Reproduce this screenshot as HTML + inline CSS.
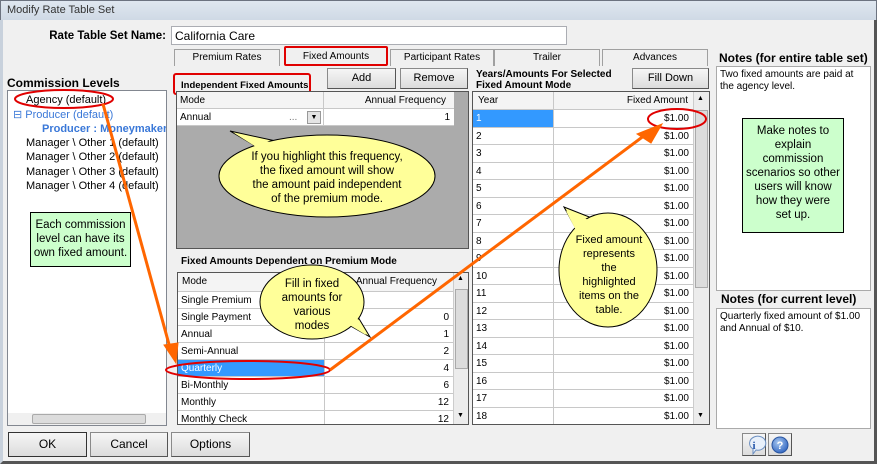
<!DOCTYPE html>
<html><head><meta charset="utf-8"><style>
*{box-sizing:border-box;margin:0;padding:0}
body{width:877px;height:464px;overflow:hidden;background:#f0f0f0;font-family:"Liberation Sans",Arial,sans-serif;font-size:11px;color:#000;position:relative}
.a{position:absolute}
.btn{position:absolute;background:linear-gradient(#f6f6f6,#dcdcdc);border:1px solid #8a8a8a;border-right-color:#555;border-bottom-color:#555;text-align:center;font-size:11px}
.box{position:absolute;background:#fff;border:1px solid #828790}
.b{font-weight:bold}
.tab{position:absolute;top:49px;height:17px;border:1px solid #a0a0a0;border-bottom:none;background:#f0f0f0;text-align:center;line-height:16px;font-size:10px}
.row{position:absolute;left:0;height:17px;border-bottom:1px solid #c8c8c8;font-size:10px;line-height:17px;background:#fff}
.c1{position:absolute;left:3px}
.cr{position:absolute;right:4px}
.hd{background:#f4f4f4;border-bottom:1px solid #c8c8c8}
.sb{position:absolute;background:#ececec;border-left:1px solid #ccc}
.tree div{position:absolute;font-size:11px;white-space:nowrap}
</style></head><body>
<div class="a" style="left:0;top:0;width:877px;height:20px;background:linear-gradient(#dfe7f0,#cfd9e5);border:1px solid #6c7380;border-bottom:none"></div>
<div class="a" style="left:7px;top:4px;font-size:11px;color:#333">Modify Rate Table Set</div>
<div class="a" style="left:0;top:20px;width:877px;height:444px;border:3px solid #c8d1dc;border-top:none;border-right:3px solid #555;border-bottom:3px solid #555"></div>

<div class="a b" style="left:0;width:166px;text-align:right;white-space:nowrap;top:30px;font-size:11.5px">Rate Table Set Name:</div>
<div class="box" style="left:171px;top:26px;width:396px;height:19px;border-color:#abadb3;padding:2px 3px;font-size:12px">California Care</div>

<div class="tab" style="left:174px;width:106px">Premium Rates</div>
<div class="tab" style="left:284px;width:104px;top:46px;height:20px;border:2px solid #e00000;border-radius:2px;line-height:18px">Fixed Amounts</div>
<div class="tab" style="left:390px;width:104px">Participant Rates</div>
<div class="tab" style="left:494px;width:106px">Trailer</div>
<div class="tab" style="left:602px;width:106px">Advances</div>

<div class="a b" style="left:7px;top:76px;font-size:12px">Commission Levels</div>
<div class="box tree" style="left:7px;top:90px;width:160px;height:336px;overflow:hidden">
<div style="left:18px;top:3px">Agency (default)</div>
<div style="left:5px;top:17px;color:#3a78d8">⊟ Producer (default)</div>
<div style="left:34px;top:32px;color:#3a78d8;font-weight:bold">Producer : Moneymaker, C</div>
<div style="left:18px;top:46px">Manager \ Other 1 (default)</div>
<div style="left:18px;top:60px">Manager \ Other 2 (default)</div>
<div style="left:18px;top:75px">Manager \ Other 3 (default)</div>
<div style="left:18px;top:89px">Manager \ Other 4 (default)</div>
<div style="left:0;top:322px;width:158px;height:12px;background:#f0f0f0"></div>
<div style="left:24px;top:323px;width:114px;height:10px;background:#dcdcdc;border:1px solid #aaa;border-radius:2px"></div>
</div>
<div class="a" style="left:30px;top:212px;width:101px;height:55px;background:#ccffcc;border:1px solid #000;text-align:center;font-size:11.5px;line-height:14px;padding-top:5px">Each commission level can have its own fixed amount.</div>

<div class="a b" style="left:173px;top:73px;width:138px;height:22px;border:2px solid #e00000;border-radius:3px;padding:5px 0 0 6px;font-size:9.5px;white-space:nowrap">Independent Fixed Amounts</div>
<div class="btn" style="left:327px;top:68px;width:69px;height:21px;line-height:19px">Add</div>
<div class="btn" style="left:400px;top:68px;width:68px;height:21px;line-height:19px">Remove</div>

<div class="a" style="left:176px;top:91px;width:293px;height:158px;background:#ababab;border:1px solid #555">
<div class="row hd" style="top:0;width:277px"><span class="c1">Mode</span><span class="cr" style="right:8px">Annual Frequency</span></div>
<div class="row" style="top:17px;width:277px"><span class="c1">Annual</span><span class="a" style="left:112px;color:#777">...</span><span class="a" style="left:130px;top:2px;width:14px;height:13px;background:#e4e4e4;border:1px solid #999;font-size:7px;line-height:12px;text-align:center">▼</span><span class="cr">1</span></div>
<div class="a" style="left:146px;top:0;width:1px;height:34px;background:#c8c8c8"></div>
</div>

<div class="a b" style="left:181px;top:256px;font-size:10px">Fixed Amounts Dependent on Premium Mode</div>
<div class="a" style="left:177px;top:272px;width:292px;height:153px;background:#fff;border:1px solid #555;overflow:hidden">
<div class="row hd" style="top:0;width:275px;height:19px"><span class="c1" style="left:4px">Mode</span><span class="cr" style="right:16px">Annual Frequency</span></div>
<div class="row" style="top:19px;width:275px"><span class="c1">Single Premium</span></div>
<div class="row" style="top:36px;width:275px"><span class="c1">Single Payment</span><span class="cr">0</span></div>
<div class="row" style="top:53px;width:275px"><span class="c1">Annual</span><span class="cr">1</span></div>
<div class="row" style="top:70px;width:275px"><span class="c1">Semi-Annual</span><span class="cr">2</span></div>
<div class="row" style="top:87px;width:275px;background:linear-gradient(90deg,#3399ff 0 146px,#fff 146px)"><span class="c1" style="color:#fff">Quarterly</span><span class="cr">4</span></div>
<div class="row" style="top:104px;width:275px"><span class="c1">Bi-Monthly</span><span class="cr">6</span></div>
<div class="row" style="top:121px;width:275px"><span class="c1">Monthly</span><span class="cr">12</span></div>
<div class="row" style="top:138px;width:275px"><span class="c1">Monthly Check</span><span class="cr">12</span></div>
<div class="a" style="left:146px;top:0;width:1px;height:153px;background:#c8c8c8"></div>
<div class="sb" style="left:275px;top:0;width:16px;height:151px"><div class="a" style="top:2px;left:3px;font-size:7px">▲</div><div class="a" style="top:16px;left:1px;width:13px;height:80px;background:#dcdcdc;border:1px solid #aaa"></div><div class="a" style="top:139px;left:3px;font-size:7px">▼</div></div>
</div>

<div class="a b" style="left:476px;top:69px;font-size:10px;line-height:11px">Years/Amounts For Selected<br>Fixed Amount Mode</div>
<div class="btn" style="left:632px;top:68px;width:77px;height:21px;line-height:19px">Fill Down</div>
<div class="a" style="left:472px;top:91px;width:238px;height:334px;background:#fff;border:1px solid #555;overflow:hidden">
<div class="row hd" style="top:0;width:220px;height:18px"><span class="c1" style="left:5px">Year</span><span class="cr" style="right:5px">Fixed Amount</span></div>
<script>
for(var i=1;i<=18;i++){document.write('<div class="row" style="top:'+(18+(i-1)*17.5)+'px;width:220px;height:17.5px;'+(i==1?'background:linear-gradient(90deg,#3399ff 0 80px,#fff 80px)':'')+'"><span class="c1" style="'+(i==1?'color:#fff':'')+'">'+i+'</span><span class="cr">$1.00</span></div>');}
</script>
<div class="a" style="left:80px;top:0;width:1px;height:334px;background:#c8c8c8"></div>
<div class="sb" style="left:220px;top:0;width:16px;height:332px"><div class="a" style="top:3px;left:3px;font-size:7px">▲</div><div class="a" style="top:18px;left:1px;width:13px;height:178px;background:#dcdcdc;border:1px solid #aaa"></div><div class="a" style="top:320px;left:3px;font-size:7px">▼</div></div>
</div>

<div class="a b" style="left:719px;top:51px;font-size:12px">Notes (for entire table set)</div>
<div class="box" style="left:716px;top:66px;width:155px;height:225px;border-color:#aaa;padding:2px 3px;font-size:10px;line-height:12px">Two fixed amounts are paid at the agency level.</div>
<div class="a" style="left:742px;top:118px;width:102px;height:115px;background:#ccffcc;border:1px solid #000;text-align:center;font-size:11.5px;line-height:14px;padding:5px 3px 0">Make notes to<br>explain<br>commission<br>scenarios so other<br>users will know<br>how they were<br>set up.</div>
<div class="a b" style="left:721px;top:292px;font-size:12px">Notes (for current level)</div>
<div class="box" style="left:716px;top:308px;width:155px;height:121px;border-color:#aaa;padding:2px 3px;font-size:10px;line-height:12px">Quarterly fixed amount of $1.00 and Annual of $10.</div>

<div class="btn" style="left:8px;top:432px;width:79px;height:25px;line-height:23px;font-size:12px;border:1px solid #333">OK</div>
<div class="btn" style="left:90px;top:432px;width:78px;height:25px;line-height:23px;font-size:12px">Cancel</div>
<div class="btn" style="left:171px;top:432px;width:79px;height:25px;line-height:23px;font-size:12px">Options</div>
<div class="btn" style="left:742px;top:433px;width:24px;height:23px"></div>
<div class="btn" style="left:768px;top:433px;width:24px;height:23px"></div>

<svg class="a" style="left:0;top:0" width="877" height="464">
<defs><radialGradient id="bl" cx="0.4" cy="0.35" r="0.7"><stop offset="0" stop-color="#a8c8f0"/><stop offset="1" stop-color="#2f64c0"/></radialGradient></defs>
<path d="M754,437 a8,7 0 1 1 2,13 l-3,4 l0,-5 a8,7 0 0 1 1,-12z" fill="#e8f0fa" stroke="#6a8ec0"/>
<text x="754" y="449" font-family="Liberation Serif,serif" font-weight="bold" font-size="11" fill="#2255aa" text-anchor="middle">i</text>
<circle cx="780" cy="445" r="8" fill="url(#bl)" stroke="#2a55a0"/>
<text x="780" y="449" font-family="Liberation Sans,sans-serif" font-weight="bold" font-size="11" fill="#fff" text-anchor="middle">?</text>

<g fill="#ffff99" stroke="#000" stroke-width="1">
<polygon points="230,131 262,150 285,143"/>
<ellipse cx="327" cy="176" rx="108" ry="41"/>
<polygon points="370,337 340,320 355,312"/>
<ellipse cx="312" cy="302" rx="52" ry="37"/>
<polygon points="564,207 580,236 602,222"/>
<ellipse cx="608" cy="270" rx="49" ry="57"/>
</g>
<g fill="#ffff99">
<polygon points="234,133 264,152 282,145"/>
<polygon points="366,335 338,318 353,310"/>
<polygon points="566,211 581,240 599,224"/>
</g>
<g font-family="Liberation Sans, Arial, sans-serif" font-size="11.5" text-anchor="middle">
<text x="327" y="160">If you highlight this frequency,</text>
<text x="327" y="174">the fixed amount will show</text>
<text x="327" y="188">the amount paid independent</text>
<text x="327" y="202">of the premium mode.</text>
<text x="312" y="287">Fill in fixed</text>
<text x="312" y="301">amounts for</text>
<text x="312" y="315">various</text>
<text x="312" y="329">modes</text>
</g>
<g font-family="Liberation Sans, Arial, sans-serif" font-size="11" text-anchor="middle">
<text x="609" y="243">Fixed amount</text>
<text x="609" y="257">represents</text>
<text x="609" y="271">the</text>
<text x="609" y="285">highlighted</text>
<text x="609" y="299">items on the</text>
<text x="609" y="313">table.</text>
</g>
<g fill="none" stroke="#e00000" stroke-width="2">
<ellipse cx="64" cy="99" rx="49" ry="9"/>
<ellipse cx="248" cy="370" rx="82" ry="9"/>
<ellipse cx="677" cy="119" rx="29" ry="10"/>
</g>
<g stroke="#ff6600" stroke-width="3" fill="#ff6600">
<line x1="103" y1="104" x2="170" y2="348"/>
<path d="M164,345 L178,343 L176,363 Z" stroke-width="1"/>
<line x1="330" y1="370" x2="645" y2="135"/>
<path d="M637,134 L651,143 L662,124 Z" stroke-width="1"/>
</g>
</svg>
</body></html>
